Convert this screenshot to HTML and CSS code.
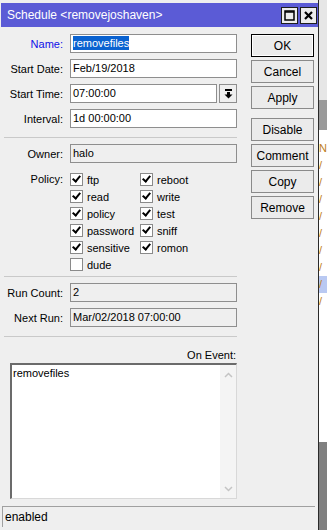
FILE: index.html
```html
<!DOCTYPE html>
<html lang="en">
<head>
    <meta charset="UTF-8">
    <meta name="viewport" content="width=device-width, initial-scale=1.0">
    <title>Schedule &lt;removejoshaven&gt;</title>
    <link rel="stylesheet" href="styles.css">
</head>
<body>
    <div class="window">
        <div class="titlebar">
            <span class="title">Schedule &lt;removejoshaven&gt;</span>
            <span class="tbtn">
                <svg width="11" height="11" viewBox="0 0 11 11"><rect x="1" y="1" width="9" height="9" fill="none" stroke="#000" stroke-width="1.5"/><line x1="1" y1="2" x2="10" y2="2" stroke="#000" stroke-width="1.5"/></svg>
            </span>
            <span class="tbtn">
                <svg width="11" height="11" viewBox="0 0 11 11"><path d="M2 2 L9 9 M9 2 L2 9" stroke="#000" stroke-width="2.2"/></svg>
            </span>
        </div>

        <div class="content">
            <div class="form">
                <div class="row">
                    <label class="lbl focus">Name:</label>
                    <div class="field"><span class="sel">removefiles</span></div>
                </div>
                <div class="row">
                    <label class="lbl">Start Date:</label>
                    <div class="field">Feb/19/2018</div>
                </div>
                <div class="row">
                    <label class="lbl">Start Time:</label>
                    <div class="field short">07:00:00</div>
                    <div class="drop">
                        <svg width="9" height="10" viewBox="0 0 9 10"><rect x="1" y="0" width="7" height="2" fill="#000"/><rect x="3" y="3" width="3" height="3" fill="#000"/><path d="M0.5 5.5 L8.5 5.5 L4.5 9.5 Z" fill="#000"/></svg>
                    </div>
                </div>
                <div class="row">
                    <label class="lbl">Interval:</label>
                    <div class="field">1d 00:00:00</div>
                </div>

                <div class="sep"></div>

                <div class="row">
                    <label class="lbl">Owner:</label>
                    <div class="field ro">halo</div>
                </div>

                <div class="policy">
                    <label class="lbl">Policy:</label>
                    <div class="checks">
                        <div class="chk"><span class="box on"></span>ftp</div>
                        <div class="chk"><span class="box on"></span>reboot</div>
                        <div class="chk"><span class="box on"></span>read</div>
                        <div class="chk"><span class="box on"></span>write</div>
                        <div class="chk"><span class="box on"></span>policy</div>
                        <div class="chk"><span class="box on"></span>test</div>
                        <div class="chk"><span class="box on"></span>password</div>
                        <div class="chk"><span class="box on"></span>sniff</div>
                        <div class="chk"><span class="box on"></span>sensitive</div>
                        <div class="chk"><span class="box on"></span>romon</div>
                        <div class="chk"><span class="box"></span>dude</div>
                    </div>
                </div>

                <div class="sep"></div>

                <div class="row">
                    <label class="lbl">Run Count:</label>
                    <div class="field ro">2</div>
                </div>
                <div class="row">
                    <label class="lbl">Next Run:</label>
                    <div class="field ro">Mar/02/2018 07:00:00</div>
                </div>

                <div class="sep"></div>

                <div class="event-lbl">On Event:</div>
                <div class="editor">
                    <div class="editor-text">removefiles</div>
                    <div class="scroll">
                        <svg width="9" height="6" viewBox="0 0 9 6"><path d="M1 5 L4.5 1.5 L8 5" fill="none" stroke="#c4c4c4" stroke-width="1.5"/></svg>
                        <svg width="9" height="6" viewBox="0 0 9 6"><path d="M1 1 L4.5 4.5 L8 1" fill="none" stroke="#c4c4c4" stroke-width="1.5"/></svg>
                    </div>
                </div>
            </div>

            <div class="buttons">
                <button class="btn default">OK</button>
                <button class="btn">Cancel</button>
                <button class="btn">Apply</button>
                <button class="btn gap">Disable</button>
                <button class="btn">Comment</button>
                <button class="btn">Copy</button>
                <button class="btn">Remove</button>
            </div>
        </div>

        <div class="status">enabled</div>
    </div>

    <div class="behind">
        <div class="bh-top"></div>
        <div class="bh-bar"></div>
        <div class="bh-list">
            <span class="mark">N</span>
            <span class="mark">/</span>
            <span class="mark">/</span>
            <span class="mark">/</span>
            <span class="mark">/</span>
            <span class="mark">/</span>
            <span class="mark">/</span>
            <span class="mark">/</span>
            <span class="mark hl">/</span>
            <span class="mark">/</span>
        </div>
        <div class="bh-bottom"></div>
    </div>
</body>
</html>
```

FILE: styles.css
```css
body {
    margin: 0;
    width: 327px;
    height: 530px;
    display: flex;
    overflow: hidden;
    font-family: "Liberation Sans", Arial, sans-serif;
    font-size: 11px;
    color: #000;
    background-color: #dcdcdc;
}
.window {
    width: 322px;
    height: 530px;
    padding: 3px 0 0 1px;
    box-sizing: border-box;
    background-color: #efefef;
    border-right: 1px solid #2a2a2a;
    display: flex;
    flex-direction: column;
}
.titlebar {
    height: 24px;
    background-color: #5b5bd6;
    display: flex;
    align-items: center;
    padding-right: 1px;
}
.title {
    flex: 1;
    color: #fff;
    font-size: 12px;
    padding-left: 6px;
}
.tbtn {
    width: 15px;
    height: 15px;
    margin-left: 2px;
    background-color: #ececec;
    border: 1px solid #1e1e1e;
    display: flex;
    align-items: center;
    justify-content: center;
}
.content {
    display: flex;
    padding-top: 7px;
}
.form {
    width: 236px;
    display: flex;
    flex-direction: column;
}
.row {
    display: flex;
    align-items: center;
    height: 19px;
    margin-bottom: 6px;
}
.lbl {
    width: 62px;
    margin-right: 7px;
    text-align: right;
    flex: none;
}
.lbl.focus {
    color: #1010e8;
}
.field {
    width: 163px;
    height: 17px;
    line-height: 17px;
    border: 1px solid #8e8e8e;
    background-color: #fff;
    padding-left: 2px;
    box-sizing: content-box;
    white-space: nowrap;
}
.field.short {
    width: 143px;
}
.field.ro {
    background-color: #efefef;
}
.sel {
    background-color: #0a62d0;
    color: #fff;
    padding: 1px 0;
}
.drop {
    width: 16px;
    height: 17px;
    margin-left: 2px;
    border: 1px solid #8e8e8e;
    display: flex;
    align-items: center;
    justify-content: center;
}
.sep {
    height: 1px;
    margin: 3px 0 6px 3px;
    background-color: #c9c9c9;
}
.policy {
    display: flex;
    align-items: flex-start;
    margin-top: 2px;
}
.policy .lbl {
    line-height: 17px;
}
.checks {
    display: grid;
    grid-template-columns: 70px 70px;
    grid-auto-rows: 17px;
}
.chk {
    display: flex;
    align-items: center;
    gap: 4px;
}
.box {
    width: 11px;
    height: 11px;
    border: 1px solid #8a8a8a;
    background-color: #fff;
    display: inline-block;
    position: relative;
}
.box.on::after {
    content: "";
    position: absolute;
    left: 3px;
    top: 0px;
    width: 3px;
    height: 6px;
    border: solid #000;
    border-width: 0 2px 2px 0;
    transform: rotate(40deg);
}
.event-lbl {
    text-align: right;
    padding-right: 1px;
    height: 14px;
    line-height: 14px;
    margin-top: 5px;
    margin-bottom: 1px;
}
.editor {
    margin-left: 9px;
    height: 133px;
    border: 1px solid #d8d8d8;
    border-top: 2px solid #6b6b6b;
    border-left: 2px solid #6b6b6b;
    background-color: #fff;
    display: flex;
}
.editor-text {
    flex: 1;
    padding: 2px 1px;
}
.scroll {
    width: 16px;
    background-color: #f4f4f4;
    display: flex;
    flex-direction: column;
    justify-content: space-between;
    align-items: center;
    padding: 7px 0 6px;
}
.buttons {
    margin-left: 14px;
    display: flex;
    flex-direction: column;
    gap: 3px;
}
.btn {
    width: 63px;
    height: 23px;
    font-family: "Liberation Sans", Arial, sans-serif;
    font-size: 12px;
    color: #000;
    background-color: #ebebeb;
    border: 1px solid #8a8a8a;
    padding: 0;
}
.btn.default {
    border: 1px solid #000;
    box-shadow: inset 0 0 0 1px #fff;
}
.btn.gap {
    margin-top: 6px;
}
.status {
    margin: auto 3px 3px 1px;
    height: 20px;
    line-height: 20px;
    border-top: 1px solid #a0a0a0;
    border-left: 1px solid #a0a0a0;
    padding-left: 2px;
    font-size: 12px;
}
.behind {
    flex: 1;
    display: flex;
    flex-direction: column;
    background-color: #e6e6e6;
}
.bh-top {
    height: 100px;
}
.bh-bar {
    height: 30px;
    background-color: #9a9a9a;
}
.bh-list {
    height: 302px;
    background-color: #fff;
    display: flex;
    flex-direction: column;
    padding-top: 10px;
    font-size: 11px;
    line-height: 17px;
    overflow: hidden;
}
.mark {
    color: #c08020;
}
.mark.hl {
    background-color: #b9c9f2;
}
.bh-bottom {
    flex: 1;
    background-color: #808080;
}
```
